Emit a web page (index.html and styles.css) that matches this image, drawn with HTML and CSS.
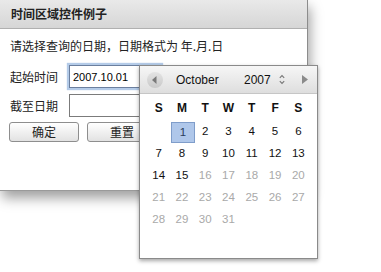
FILE: index.html
```html
<!DOCTYPE html>
<html lang="zh">
<head>
<meta charset="utf-8">
<title>时间区域控件例子</title>
<link rel="stylesheet" href="styles.css">
</head>
<body>
<div class="panel">
  <div class="title">时间区域控件例子</div>
  <div class="content">
    <p class="hint">请选择查询的日期，日期格式为 年.月.日</p>
    <div class="row"><span class="label">起始时间</span><input class="field focus" type="text" value="2007.10.01"></div>
    <div class="row"><span class="label">截至日期</span><input class="field" type="text" value=""></div>
    <div class="buttons"><button class="btn">确定</button><button class="btn">重置</button></div>
  </div>
</div>

<div class="calendar">
  <div class="cal-head">
    <span class="prev"><svg width="16" height="16" viewBox="0 0 16 16"><polygon points="9.5,4 5,8 9.5,12" fill="#7a7a7a"/></svg></span>
    <span class="month">October</span>
    <span class="year">2007</span>
    <span class="spin"><svg width="6" height="11" viewBox="0 0 6 11"><polyline points="0.8,3.8 3,1.5 5.2,3.8" fill="none" stroke="#777" stroke-width="1.1"/><polyline points="0.8,7.2 3,9.5 5.2,7.2" fill="none" stroke="#777" stroke-width="1.1"/></svg></span>
    <span class="next"><svg width="6" height="9" viewBox="0 0 6 9"><polygon points="0,0 6,4.5 0,9" fill="#8a8a8a"/></svg></span>
  </div>
  <div class="days">
    <span class="dow">S</span><span class="dow">M</span><span class="dow">T</span><span class="dow">W</span><span class="dow">T</span><span class="dow">F</span><span class="dow">S</span>
    <span></span><span class="d sel">1</span><span class="d">2</span><span class="d">3</span><span class="d">4</span><span class="d">5</span><span class="d">6</span>
    <span class="d">7</span><span class="d">8</span><span class="d">9</span><span class="d">10</span><span class="d">11</span><span class="d">12</span><span class="d">13</span>
    <span class="d">14</span><span class="d">15</span><span class="d off">16</span><span class="d off">17</span><span class="d off">18</span><span class="d off">19</span><span class="d off">20</span>
    <span class="d off">21</span><span class="d off">22</span><span class="d off">23</span><span class="d off">24</span><span class="d off">25</span><span class="d off">26</span><span class="d off">27</span>
    <span class="d off">28</span><span class="d off">29</span><span class="d off">30</span><span class="d off">31</span>
  </div>
</div>
</body>
</html>
```

FILE: styles.css
```css
html, body {
  margin: 0;
  padding: 0;
  background: #fff;
}
body {
  font-family: "Noto Sans CJK SC", "Liberation Sans", sans-serif;
  font-size: 12px;
  color: #111;
  width: 381px;
  height: 272px;
  overflow: hidden;
  position: relative;
}
.panel {
  width: 307px;
  height: 190px;
  border-right: 1px solid #8c8c8c;
  border-bottom: 1px solid #9a9a9a;
  box-sizing: content-box;
  background: #fff;
  box-shadow: 2px 7px 12px rgba(0, 0, 0, 0.38);
}
.title {
  height: 28px;
  line-height: 28px;
  border-bottom: 1px solid #b0b0b0;
  background: linear-gradient(#e9e9e9, #d6d6d6);
  padding-left: 11px;
  font-weight: bold;
  font-size: 12px;
  color: #222;
}
.content {
  padding: 0 0 0 10px;
}
.hint {
  margin: 8px 0 0;
  line-height: 18px;
  color: #222;
}
.row {
  display: flex;
  align-items: center;
  margin-top: 10px;
  height: 23px;
}
.row + .row {
  margin-top: 6px;
}
.label {
  width: 59px;
  color: #222;
}
.field {
  box-sizing: border-box;
  width: 92px;
  height: 23px;
  margin: 0;
  padding: 0 0 0 3px;
  border: 1px solid #7b7b7b;
  font-family: "Liberation Sans", Arial, sans-serif;
  font-size: 11px;
  color: #000;
  background: #fff;
  outline: none;
}
.field.focus {
  border-color: #6b7f9e;
  box-shadow: 0 0 1px 2px #b4cbe8;
}
.buttons {
  display: flex;
  gap: 8px;
  margin-top: 5px;
  margin-left: -1px;
}
.btn {
  width: 70px;
  height: 20px;
  padding: 0;
  border: 1px solid #8e8e8e;
  border-radius: 3px;
  background: linear-gradient(#ffffff, #e2e2e2);
  font-family: "Noto Sans CJK SC", sans-serif;
  font-size: 12px;
  color: #222;
  line-height: 18px;
}

.calendar {
  position: absolute;
  left: 139px;
  top: 65px;
  width: 179px;
  height: 194px;
  box-sizing: border-box;
  border: 1px solid #8a8a8a;
  background: #fff;
  box-shadow: 0 2px 4px rgba(0, 0, 0, 0.35);
  font-family: "Liberation Sans", Arial, sans-serif;
}
.cal-head {
  height: 28px;
  box-sizing: border-box;
  border-bottom: 1px solid #c6c6c6;
  background: linear-gradient(#f6f6f6, #dedede);
  display: flex;
  align-items: center;
  font-size: 12px;
  color: #111;
}
.prev {
  width: 16px;
  height: 16px;
  margin-left: 7px;
  border-radius: 50%;
  background: linear-gradient(#e4e4e4, #c9c9c9);
  display: flex;
}
.month {
  margin-left: 13px;
  width: 68px;
}
.year {
  width: 35px;
}
.spin {
  width: 6px;
  display: flex;
}
.next {
  margin-left: 17px;
  width: 6px;
  display: flex;
}
.days {
  display: grid;
  grid-template-columns: repeat(7, 1fr);
  grid-template-rows: 24px;
  grid-auto-rows: 22px;
  padding: 2px 7px 0 7px;
  font-size: 11.5px;
}
.days span {
  text-align: center;
}
.dow {
  font-weight: bold;
  font-size: 12px;
  line-height: 24px;
  color: #111;
}
.d {
  line-height: 22px;
  color: #111;
}
.d.off {
  color: #a9a9a9;
}
.d.sel {
  box-sizing: border-box;
  height: 21px;
  line-height: 19px;
  margin: 1.5px -1px 0 1px;
  background: #afc7ea;
  border: 1px solid #7f9dca;
  color: #2a3c5c;
}
```
